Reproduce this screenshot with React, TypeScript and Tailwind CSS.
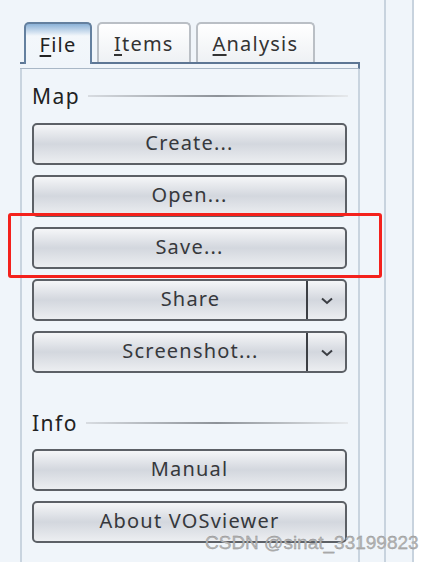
import { ReactNode } from "react";

const font = { fontFamily: '"Noto Sans", "Open Sans", sans-serif' };

const Chevron = () => (
  <svg width="14" height="8" viewBox="0 0 14 8" className="block">
    <path d="M2 1.5 L7 6 L12 1.5" fill="none" stroke="#3a3d42" strokeWidth="2" />
  </svg>
);

const Btn = ({ label, split }: { label: string; split?: boolean }) => (
  <div className="flex h-[42px] w-[315px] rounded-[5px] border-2 border-[#5c6066] bg-gradient-to-b from-[#f5f6f8] via-[#d3d7de] to-[#eceef1] text-[20px] tracking-[1.2px] text-[#36383c]">
    <div className={`flex flex-1 items-center justify-center pb-[2px] ${split ? "pl-[41px]" : ""}`}>{label}</div>
    {split && (
      <div className="flex w-[39px] items-center justify-center border-l-2 border-[#3c3f44] pt-[2px]">
        <Chevron />
      </div>
    )}
  </div>
);

const Heading = ({ children }: { children: ReactNode }) => (
  <div className="flex h-[30px] items-center gap-[8px] pr-[10px] text-[21px] leading-[30px] tracking-[1.5px] text-[#222]">
    <span>{children}</span>
    <div className="h-[2px] flex-1 bg-gradient-to-r from-[#d8dce1] via-[#8d9298] to-[#e6e9ec]" />
  </div>
);

const Tab = ({ u, rest, active }: { u: string; rest: string; active?: boolean }) =>
  active ? (
    <div className="relative z-10 mb-[-2px] flex h-[42px] w-[68px] items-center justify-center rounded-t-[5px] border-2 border-b-0 border-[#64809f] bg-gradient-to-b from-[#8cb2d7] from-0% via-[#f3f7fb] via-30% to-[#f0f5fa] pt-[2px] text-[20px] tracking-[1.2px] text-[#222]">
      <span>
        <span className="underline underline-offset-[3px]">{u}</span>
        {rest}
      </span>
    </div>
  ) : (
    <div className="flex h-[40px] items-center justify-center rounded-t-[5px] border-2 border-b-0 border-[#babfc5] bg-gradient-to-b from-[#ffffff] to-[#eef1f4] px-[15px] pt-[2px] text-[20px] tracking-[1.2px] text-[#333]">
      <span>
        <span className="underline underline-offset-[3px]">{u}</span>
        {rest}
      </span>
    </div>
  );

export default function App() {
  return (
    <div className="relative flex h-[562px] w-[440px] overflow-hidden bg-white" style={font}>
      <div className="w-[384px] bg-[#f0f5fa] pt-[22px] pl-[20px]">
        <div className="flex items-end gap-[5px] pl-[4px]">
          <Tab u="F" rest="ile" active />
          <Tab u="I" rest="tems" />
          <Tab u="A" rest="nalysis" />
        </div>
        <div className="w-[340px]">
          <div className="h-[7px] border-t-2 border-b border-r-2 border-t-[#5d7694] border-b-[#a9b7c6] border-r-[#5d7694]" />
          <div className="h-[500px] border-x-2 border-[#c9d4df] pl-[10px] pt-[12px]">
            <Heading>Map</Heading>
            <div className="mt-[12px] flex flex-col gap-[10px]">
              <Btn label="Create..." />
              <Btn label="Open..." />
              <Btn label="Save..." />
              <Btn label="Share" split />
              <Btn label="Screenshot..." split />
            </div>
            <div className="mt-[35px]">
              <Heading>Info</Heading>
            </div>
            <div className="mt-[11px] flex flex-col gap-[10px]">
              <Btn label="Manual" />
              <Btn label="About VOSviewer" />
            </div>
          </div>
        </div>
      </div>
      <div className="w-[2px] bg-[#c8d3de]" />
      <div className="w-[26px] bg-[#f0f5fa]" />
      <div className="w-[2px] bg-[#c8d3de]" />
      <div className="flex-1 bg-white" />

      <div className="absolute left-[8px] top-[213px] h-[65px] w-[374px] rounded-[3px] border-[3px] border-[#f4211c]" />
      <div
        className="absolute left-[205px] top-[529px] text-[19px] text-[#b5b5b5]"
        style={{ fontFamily: '"Liberation Sans", Arial, sans-serif', WebkitTextStroke: "0.3px #8a8a8a" }}
      >
        CSDN @sinat_33199823
      </div>
    </div>
  );
}
